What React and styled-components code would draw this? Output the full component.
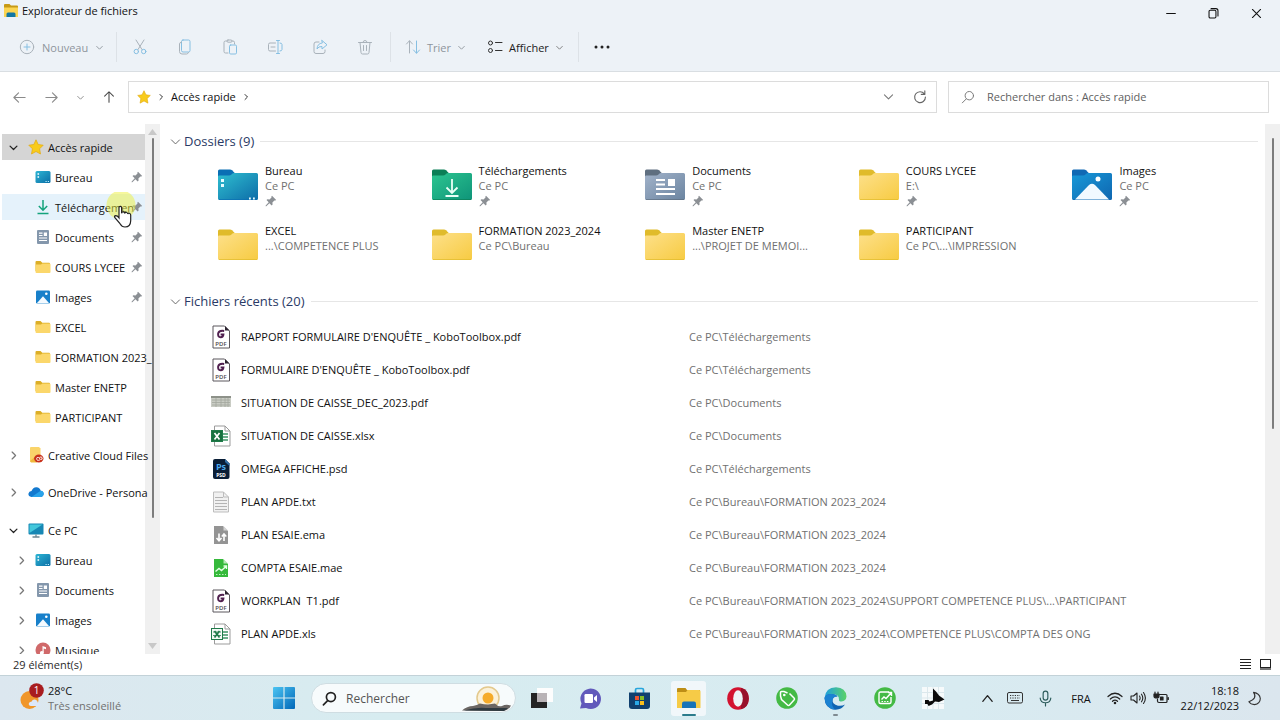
import React, { useState } from 'react';
import styled, { createGlobalStyle } from 'styled-components';

const GlobalStyle = createGlobalStyle`
  * { box-sizing: border-box; }
  body {
    margin: 0;
    overflow: hidden;
    font-family: 'Open Sans', 'Noto Sans', sans-serif;
    font-size: 11px;
    line-height: 15px;
    color: #111;
  }
  button, input {
    font: inherit;
    color: inherit;
    margin: 0;
    padding: 0;
    border: 0;
    background: none;
  }
  svg { display: block; flex: none; }
`;

/* ---------- data ---------- */

const quickAccess = [
  { name: 'Bureau', icon: 'desktop', pinned: true },
  { name: 'Téléchargemen', icon: 'download', pinned: true, hover: true },
  { name: 'Documents', icon: 'document', pinned: true },
  { name: 'COURS LYCEE', icon: 'folder', pinned: true },
  { name: 'Images', icon: 'picture', pinned: true },
  { name: 'EXCEL', icon: 'folder' },
  { name: 'FORMATION 2023_', icon: 'folder' },
  { name: 'Master ENETP', icon: 'folder' },
  { name: 'PARTICIPANT', icon: 'folder' },
];

const thisPc = [
  { name: 'Bureau', icon: 'desktop' },
  { name: 'Documents', icon: 'document' },
  { name: 'Images', icon: 'picture' },
  { name: 'Musique', icon: 'music' },
];

const folders = [
  { name: 'Bureau', path: 'Ce PC', kind: 'desktop', pinned: true },
  { name: 'Téléchargements', path: 'Ce PC', kind: 'download', pinned: true },
  { name: 'Documents', path: 'Ce PC', kind: 'document', pinned: true },
  { name: 'COURS LYCEE', path: 'E:\\', kind: 'plain', pinned: true },
  { name: 'Images', path: 'Ce PC', kind: 'picture', pinned: true },
  { name: 'EXCEL', path: '...\\COMPETENCE PLUS', kind: 'plain' },
  { name: 'FORMATION 2023_2024', path: 'Ce PC\\Bureau', kind: 'plain' },
  { name: 'Master ENETP', path: '...\\PROJET DE MEMOI...', kind: 'plain' },
  { name: 'PARTICIPANT', path: 'Ce PC\\...\\IMPRESSION', kind: 'plain' },
];

const files = [
  { name: "RAPPORT FORMULAIRE D'ENQUÊTE _ KoboToolbox.pdf", path: 'Ce PC\\Téléchargements', type: 'pdf' },
  { name: "FORMULAIRE D'ENQUÊTE _ KoboToolbox.pdf", path: 'Ce PC\\Téléchargements', type: 'pdf' },
  { name: 'SITUATION DE CAISSE_DEC_2023.pdf', path: 'Ce PC\\Documents', type: 'thumb' },
  { name: 'SITUATION DE CAISSE.xlsx', path: 'Ce PC\\Documents', type: 'xlsx' },
  { name: 'OMEGA AFFICHE.psd', path: 'Ce PC\\Téléchargements', type: 'psd' },
  { name: 'PLAN APDE.txt', path: 'Ce PC\\Bureau\\FORMATION 2023_2024', type: 'txt' },
  { name: 'PLAN ESAIE.ema', path: 'Ce PC\\Bureau\\FORMATION 2023_2024', type: 'ema' },
  { name: 'COMPTA ESAIE.mae', path: 'Ce PC\\Bureau\\FORMATION 2023_2024', type: 'mae' },
  { name: 'WORKPLAN  T1.pdf', path: 'Ce PC\\Bureau\\FORMATION 2023_2024\\SUPPORT COMPETENCE PLUS\\...\\PARTICIPANT', type: 'pdf' },
  { name: 'PLAN APDE.xls', path: 'Ce PC\\Bureau\\FORMATION 2023_2024\\COMPETENCE PLUS\\COMPTA DES ONG', type: 'xls' },
];

/* ---------- icons ---------- */

const Line = ({ size = 16, color = '#5f6368', width = 1, children }) => (
  <svg width={size} height={size} viewBox="0 0 16 16" fill="none" stroke={color} strokeWidth={width} strokeLinecap="round" strokeLinejoin="round">
    {children}
  </svg>
);

const Chevron = ({ dir = 'down', size = 10, color = '#555', width = 1.6 }) => {
  const d = { down: 'M3 6l5 5 5-5', right: 'M6 3l5 5-5 5', up: 'M3 11l5-6 5 6' }[dir];
  return <Line size={size} color={color} width={width}><path d={d} /></Line>;
};

const Star = ({ size = 14 }) => (
  <svg width={size} height={size} viewBox="0 0 16 16">
    <path d="M8 .8l2.2 4.7 5 .7-3.6 3.6.9 5.2L8 12.5 3.500 15l.9-5.200L.8 6.200l5-.7z" fill="#f8cb1c" stroke="#e2a90f" strokeWidth=".7" />
  </svg>
);

const Pin = () => (
  <svg width="12" height="12" viewBox="0 0 12 12">
    <path d="M7 .8l4.200 4.200-1 .6-.8-.1-2 2.100.2 2-.9.900-2.300-2.300L1.300 11.300l-.7-.1.1-.8 3-3.100L1.500 5.100l.9-.9 2.100.2 2-2-.1-.8z" fill="#8b8f94" />
  </svg>
);

const smallIcons = {
  desktop: (
    <svg width="16" height="16" viewBox="0 0 16 16">
      <defs><linearGradient id="sDesk" x1="0" y1="0" x2="1" y2="1"><stop offset="0" stopColor="#2db5d4" /><stop offset="1" stopColor="#0b6ea6" /></linearGradient></defs>
      <rect x=".5" y="2" width="15" height="12" rx="1.500" fill="url(#sDesk)" />
      <path d="M2.500 5h1.600M2.500 8h1.600" stroke="#fff" strokeWidth="1.500" />
      <path d="M10.500 12.500h1.200M12.800 12.500h1.200" stroke="#bdf0ff" strokeWidth="1" />
    </svg>
  ),
  download: (
    <svg width="16" height="16" viewBox="0 0 16 16" fill="none" stroke="#14a37c" strokeWidth="1.500">
      <path d="M8 1v10M3.800 7L8 11.200 12.200 7M2.500 14.500h11" />
    </svg>
  ),
  document: (
    <svg width="16" height="16" viewBox="0 0 16 16">
      <rect x="2" y="1" width="12" height="14" rx="1" fill="#8497ac" />
      <path d="M4 4.200h3.500M4 6.500h3.500M4 9h8M4 11.500h8" stroke="#fff" strokeWidth="1.200" />
      <rect x="8.800" y="3.500" width="3.200" height="3.500" fill="#fff" />
    </svg>
  ),
  folder: (
    <svg width="16" height="16" viewBox="0 0 16 16">
      <path d="M.5 3q0-1 1-1h4l1.800 1.800H14q1 0 1 1V12H.5z" fill="#dcae26" />
      <path d="M.5 5.500h5.500l1.300-1H14.500q1 0 1 1V13q0 1-1 1h-13q-1 0-1-1z" fill="#fbd76b" />
    </svg>
  ),
  picture: (
    <svg width="16" height="16" viewBox="0 0 16 16">
      <rect x="1" y="1.500" width="14" height="13" rx="1.200" fill="#1880ca" />
      <path d="M1.800 14.300L8 7.200l6.200 7.100z" fill="#f4faff" />
      <circle cx="11.300" cy="4.800" r="1.300" fill="#fff" />
    </svg>
  ),
  music: (
    <svg width="16" height="16" viewBox="0 0 16 16">
      <circle cx="8" cy="8" r="7.500" fill="#d0696a" />
      <path d="M7.500 11V4l3.500 1.200v2L8.700 6.500V11" fill="#fff" />
      <circle cx="6.800" cy="11" r="1.900" fill="#fff" />
    </svg>
  ),
  cloudFiles: (
    <svg width="16" height="16" viewBox="0 0 16 16">
      <path d="M2 1q0-1 1-1h8l1.500 1.500V15H3q-1 0-1-1z" fill="#fad46a" />
      <path d="M2 14l1 1.500h6L8 9z" fill="#f0b93c" />
      <ellipse cx="10.800" cy="11.500" rx="4.700" ry="4" fill="#c9321c" />
      <path d="M12 12.800q-3 1.600-3.400-1 .1-1.900 2-1.300l2 2q2.200.2 1.500-1.800-.8-1.500-2.700-.2" fill="none" stroke="#fff" strokeWidth=".9" />
    </svg>
  ),
  oneDrive: (
    <svg width="16" height="16" viewBox="0 0 16 16">
      <path d="M3.500 13Q.3 12.600.4 9.800.9 7.200 3.500 7 5 3 8.500 3.200q3.300.3 4.200 3.500 2.900.4 3 3.100-.2 3-3.200 3.200z" fill="#1379cf" />
      <path d="M3.500 13l6.200-4.200 3-2q2.900.4 3 3-.2 3-3.200 3.200z" fill="#29a3ea" />
    </svg>
  ),
  pc: (
    <svg width="16" height="16" viewBox="0 0 16 16">
      <rect x=".5" y="1.500" width="15" height="11" rx="1" fill="#1787b4" />
      <path d="M1.500 2.500h13L1.500 11z" fill="#43c7db" />
      <path d="M8 12.500v2M4.500 15h7" stroke="#6d8793" strokeWidth="1.300" />
    </svg>
  ),
};

const folderColors = {
  desktop: ['#0a6fb4', '#2fbfd0', '#0d6ca8'],
  download: ['#0b7f56', '#2cc590', '#0f9479'],
  document: ['#5f6f80', '#a2b3ca', '#6b84a0'],
  picture: ['#1069b4', '#1899d8', '#0f66b0'],
  plain: ['#e0bb2b', '#fde08a', '#f7cb42'],
};

const BigFolder = ({ kind }) => {
  const [tab, from, to] = folderColors[kind];
  return (
    <svg width="40" height="34" viewBox="0 0 40 34">
      <defs>
        <linearGradient id={`big-${kind}`} x1="0" y1="0" x2="1" y2="1">
          <stop offset="0" stopColor={from} /><stop offset="1" stopColor={to} />
        </linearGradient>
      </defs>
      <path d="M0 3q0-1.500 1.500-1.500H12q1.200 0 2 .8l3 3V9H0z" fill={tab} />
      <path d="M0 8.500q0-1 1.200-1H11q1.500 0 2.500-1l1-1q.6-.6 1.500-.6h22.500q1.500 0 1.500 1.500V30.500q0 1.500-1.500 1.500h-37Q0 32 0 30.500z" fill={`url(#big-${kind})`} />
      <path d="M1 31.500h38" stroke={tab} strokeOpacity=".7" />
      {kind === 'desktop' && (
        <g>
          <path d="M3 12.500h3M3 17.500h3" stroke="#e6fbff" strokeWidth="3" />
          <path d="M31 30.500h1.800M35 30.500h1.800" stroke="#e6fbff" strokeWidth="1.800" />
        </g>
      )}
      {kind === 'download' && <path d="M20 11v14M14.500 19.500l5.500 5.500 5.500-5.500M13.500 28h13" fill="none" stroke="#eafff7" strokeWidth="1.800" />}
      {kind === 'document' && (
        <g>
          <path d="M11 12h9M11 16.500h9M11 21h19M11 26h19" stroke="#fff" strokeWidth="1.800" />
          <rect x="23" y="11" width="7" height="7" fill="#fff" />
        </g>
      )}
      {kind === 'picture' && (
        <g>
          <path d="M3 31.500L17 17q3-2.500 6 0l14 14.500z" fill="#f1f9ff" />
          <circle cx="26" cy="11" r="2.500" fill="#fff" />
        </g>
      )}
    </svg>
  );
};

const Sheet = ({ fill = '#fff', stroke = '#9a9a9a', children }) => (
  <svg width="20" height="24" viewBox="0 0 20 24">
    <path d="M2.500 2h10l5 5v15h-15z" fill={fill} stroke={stroke} />
    {children}
  </svg>
);

const Excel = ({ solid }) => (
  <svg width="20" height="24" viewBox="0 0 20 24">
    <path d="M3.500 2h10.500l5 5v15H3.500z" fill="#fff" stroke="#9b9b9b" />
    <path d="M14 2v5h5" fill="none" stroke="#9b9b9b" />
    <path d="M12 10h5M12 13h5M12 16h5" stroke="#3c9465" strokeWidth="1.300" />
    <rect x=".5" y="6.500" width="11" height="11" fill={solid ? '#17713f' : '#f2f9f5'} stroke="#1f7a49" />
    {!solid && <path d="M2 10h8M2 13.500h8" stroke="#1f7a49" strokeWidth=".8" />}
    <path d="M3.500 9l5 6.500M8.500 9l-5 6.500" stroke={solid ? '#fff' : '#1f7a49'} strokeWidth="1.700" />
  </svg>
);

const fileIcons = {
  pdf: (
    <svg width="20" height="24" viewBox="0 0 20 24">
      <path d="M2 1h11.500l5 5v17H2z" fill="#fff" stroke="#5b565c" strokeWidth="1" />
      <path d="M14 1v4.500h4.500z" fill="#2d2430" />
      <path d="M13.200 6q-5-.8-6 2.300-.6 3.900 2.500 4 2.500-.2 2.700-2.900H9.600" fill="none" stroke="#50204f" strokeWidth="2" />
      <text x="10" y="20.500" fontSize="6" fontWeight="600" textAnchor="middle" fill="#4d474e">PDF</text>
    </svg>
  ),
  thumb: (
    <svg width="20" height="24" viewBox="0 0 20 24">
      <rect y="5" width="20" height="11" fill="#c9ccc4" />
      <path d="M0 6h20" stroke="#8d9189" strokeWidth="2" />
      <path d="M1 9h18M1 11.500h18M1 14h18M5 7v9M10 7v9M14 7v9M17 7v9" stroke="#a3a79e" strokeWidth=".8" />
    </svg>
  ),
  xlsx: <Excel solid />,
  xls: <Excel />,
  psd: (
    <svg width="20" height="24" viewBox="0 0 20 24">
      <path d="M4 2h10l4.500 4.500V20q0 2-2 2H4q-2 0-2-2V4q0-2 2-2z" fill="#0a1e36" />
      <path d="M14 2l4.500 4.500V9L14 5z" fill="#2f6ea5" />
      <text x="10" y="13" fontSize="9" fontWeight="700" textAnchor="middle" fill="#4ba9ee">Ps</text>
      <text x="10" y="19.500" fontSize="5" fontWeight="700" textAnchor="middle" fill="#fff">PSD</text>
    </svg>
  ),
  txt: (
    <Sheet fill="#f1f1f1" stroke="#bdbdbd">
      <path d="M12.500 2v5h5" fill="none" stroke="#bdbdbd" />
      <path d="M4 7.500h8M4 10.500h12M4 13.500h12M4 16.500h12M4 19.500h12" stroke="#b4b4b4" />
    </Sheet>
  ),
  ema: (
    <svg width="20" height="24" viewBox="0 0 20 24">
      <path d="M3 3h9l5 5v12.500q0 .5-1 .5H3z" fill="#949494" />
      <path d="M12.500 3v4.500H17z" fill="#d2d2d2" />
      <path d="M8 10.500v7M5.500 15L8 17.700l2.500-2.700M13 18v-7M10.800 13.500L13 11l2.300 2.500" fill="none" stroke="#fff" strokeWidth="1.600" />
    </svg>
  ),
  mae: (
    <svg width="20" height="24" viewBox="0 0 20 24">
      <path d="M3 3h9l5 5v13H3z" fill="#35b93b" />
      <path d="M12.500 3v4.500H17z" fill="#b5e8b5" />
      <path d="M4.500 15.500l3.500-3 2.500 2L15.500 10M12.500 10h3v3" fill="none" stroke="#e5ffe5" strokeWidth="1.400" />
      <path d="M5 18.500h10" stroke="#bff0bf" strokeDasharray="1.500 1.500" />
    </svg>
  ),
};

const AppIcon = () => (
  <svg width="16" height="16" viewBox="0 0 16 16">
    <path d="M1 2q0-1 1-1h4.500L8 2.500h6q1 0 1 1V8H1z" fill="#c79a16" />
    <path d="M1 4.500h14V14H1z" fill="#fbd552" />
    <path d="M3.500 14v-3q0-1.500 1.500-1.500h6q1.500 0 1.500 1.500v3z" fill="#1277a3" />
  </svg>
);

/* command bar drawings: grey outline with a light blue accent */
const grey = '#a9b2ba';
const blue = '#86bfe2';

const CutIcon = () => (
  <Line color={grey}>
    <path d="M4 1l6 9.500M12 1L6 10.500" />
    <circle cx="4.300" cy="12.500" r="2.200" stroke={blue} /><circle cx="11.700" cy="12.500" r="2.200" stroke={blue} />
  </Line>
);
const CopyIcon = () => (
  <Line color={blue}>
    <rect x="4.500" y="1" width="8.500" height="12" rx="1.500" /><path d="M4.500 3q-2 .3-2 2v7.500q0 2.500 2.500 2.500h4.500q1.500 0 2-1.500" stroke={grey} />
  </Line>
);
const PasteIcon = () => (
  <Line color={grey}>
    <path d="M6 14H3.500Q2 14 2 12.500v-9Q2 2 3.500 2H5M10 2h1q1.500 0 1.500 1.500V5" /><rect x="5" y="1" width="5" height="2.200" rx="1" />
    <rect x="7.500" y="6" width="7" height="9" rx="1.200" stroke={blue} />
  </Line>
);
const RenameIcon = () => (
  <Line color={grey}>
    <path d="M8.500 12H3q-1.500 0-1.500-1.500v-5Q1.500 4 3 4h5.500M4 8h4" />
    <path d="M11 1.500v13M9.500 1.500h3M9.500 14.500h3M13 4q2 0 2 1.500v5Q15 12 13 12" stroke={blue} />
  </Line>
);
const ShareIcon = () => (
  <Line color={grey}>
    <path d="M7 3H4Q2 3 2 5v7.500q0 2 2 2h7q2 0 2-2V11" />
    <path d="M10 1.500l5 4.300-5 4.200V7.500q-3.500-.3-5 2.500.3-5.500 5-6z" stroke={blue} />
  </Line>
);
const TrashIcon = () => (
  <Line color={grey}><path d="M1.500 3.500h13M6 3.500Q6 1.500 8 1.500t2 2M3 3.500l1 10q.1 1.500 1.500 1.500h5q1.400 0 1.500-1.500l1-10M6.500 6.500v5M9.500 6.500v5" /></Line>
);
const PlusIcon = () => (
  <Line color={grey}><circle cx="8" cy="8" r="6.700" /><path d="M8 5v6M5 8h6" stroke={blue} /></Line>
);
const SortIcon = () => (
  <Line color={grey}><path d="M4.500 14V2M1.500 5l3-3.300 3 3.300" /><path d="M11.500 2v12M8.500 11l3 3.300 3-3.300" stroke={blue} /></Line>
);
const ViewIcon = () => (
  <Line color="#333"><circle cx="3.500" cy="4" r="2" /><circle cx="3.500" cy="11.500" r="2" /><path d="M8.500 3.500H15M8.500 11.500H15" /></Line>
);
const SearchIcon = ({ size = 14, color = '#777', width = 1.1 }) => (
  <Line size={size} color={color} width={width}><circle cx="9.500" cy="6.500" r="4.800" /><path d="M6 10.200L1.500 14.700" /></Line>
);

/* ---------- window ---------- */

const Screen = styled.div`
  display: flex;
  flex-direction: column;
  height: 100vh;
  background: #fff;
`;

const Header = styled.header`
  background: #edf2f7;
  border-bottom: 1px solid #d9dee2;
`;

const TitleBar = styled.div`
  display: flex;
  justify-content: space-between;
  height: 26px;
`;

const Title = styled.h1`
  display: flex;
  align-items: center;
  gap: 3px;
  height: 21px;
  margin: 0;
  padding-left: 3px;
  font-size: 11px;
  font-weight: 400;
`;

const WindowButtons = styled.div`
  display: flex;
  padding-right: 2px;
`;

const WindowButton = styled.button`
  display: grid;
  place-items: center;
  width: 43px;
`;

const CommandBar = styled.div`
  display: flex;
  align-items: center;
  height: 45px;
  padding: 0 0 3px 19px;
`;

const Command = styled.button`
  display: flex;
  align-items: center;
  gap: ${p => p.$gap || 7}px;
  width: ${p => p.$width}px;
  color: ${p => (p.$active ? '#1b1b1b' : '#8d959c')};
`;

const ToolGroup = styled.div`
  display: flex;
  padding-right: 3px;
`;

const SortGroup = styled.div`
  display: flex;
  padding-left: 14px;
`;

const Tool = styled.button`
  display: grid;
  place-items: center;
  width: 45px;
  height: 30px;
`;

const Divider = styled.span`
  width: 1px;
  height: 30px;
  background: #dde2e7;
`;

const AddressRow = styled.div`
  display: flex;
  align-items: center;
  padding: 9px 11px 11px 12px;
`;

const NavButtons = styled.nav`
  display: flex;
  align-items: center;
  gap: 17px;
  width: 116px;
`;

const NavButton = styled.button`
  display: grid;
  place-items: center;
`;

const AddressBox = styled.div`
  display: flex;
  align-items: center;
  flex: 1;
  gap: 6px;
  height: 32px;
  padding: 0 9px 1px 8px;
  border: 1px solid #dcdcdc;
`;

const Crumb = styled.a`
  color: inherit;
  text-decoration: none;
`;

const AddressActions = styled.div`
  display: flex;
  gap: 18px;
  margin-left: auto;
`;

const SearchBox = styled.label`
  display: flex;
  align-items: center;
  gap: 12px;
  flex: 0 0 321px;
  height: 32px;
  margin-left: 11px;
  padding: 0 0 1px 12px;
  border: 1px solid #dcdcdc;

  input {
    flex: 1;
    min-width: 0;
    outline: none;
  }
  input::placeholder {
    color: #5f5f5f;
    opacity: 1;
  }
`;

const Body = styled.div`
  display: flex;
  flex: 1;
  min-height: 0;
`;

/* ---------- side tree ---------- */

const Tree = styled.nav`
  position: relative;
  z-index: 1;
  display: flex;
  flex-direction: column;
  gap: 8px;
  width: 145px;
  padding: 8px 0 0 2px;
  overflow-x: visible;
  overflow-y: clip;
`;

const TreeGroup = styled.div`
  display: flex;
  flex-direction: column;
  gap: ${p => p.$gap || 0}px;
`;

const TreeRow = styled.button`
  position: relative;
  display: flex;
  align-items: center;
  flex: none;
  gap: 4px;
  width: 100%;
  height: 26px;
  margin: 2px 0;
  padding-left: ${p => (p.$level ? 14 : 6)}px;
  padding-right: 2px;
  text-align: left;
  white-space: nowrap;
  background: ${p => (p.$selected ? '#d5d5d5' : p.$hover ? '#e5f2fb' : 'transparent')};
`;

const Twisty = styled.span`
  width: ${p => (p.$level ? 15 : 16)}px;
  flex: none;
`;

const TreeLabel = styled.span`
  flex: 1;
  min-width: 0;
`;

const PinSlot = styled.span`
  flex: none;
`;

/* click halo and hand pointer resting on the hovered row */
const Pointer = styled.span`
  position: absolute;
  left: 103px;
  top: -2px;
  z-index: 1;
  pointer-events: none;
`;

const Track = styled.div`
  display: flex;
  flex-direction: column;
  align-items: center;
  flex: none;
  width: 15px;
  padding: 5px 0;
  background: #f0f0f0;
`;

const Thumb = styled.span`
  width: 2px;
  margin-top: 3px;
  height: ${p => p.$size}%;
  border-radius: 1px;
  background: #7d7d7d;
`;

const TrackEnd = styled.span`
  margin-top: auto;
`;

/* ---------- content ---------- */

const Content = styled.main`
  flex: 1;
  min-width: 0;
  padding-right: 7px;
  overflow: hidden;
`;

const SectionTitle = styled.h2`
  display: flex;
  align-items: center;
  gap: 2px;
  height: 34px;
  margin: 0;
  padding-left: 9px;
  font-size: 13px;
  font-weight: 400;
  color: #2a3a66;

  &::after {
    content: '';
    flex: 1;
    height: 1px;
    margin-left: 4px;
    background: #e6e6e6;
  }
`;

const FolderGrid = styled.div`
  display: grid;
  grid-template-columns: repeat(5, 1fr);
  grid-auto-rows: 60px;
  margin-right: -3px;
  padding: 5px 0 1px 33px;
`;

const FolderItem = styled.a`
  display: flex;
  align-items: flex-start;
  gap: 7px;
  padding-left: 25px;
  color: inherit;
  text-decoration: none;

  > svg {
    margin-top: 5px;
  }
`;

const FolderText = styled.div`
  display: flex;
  flex-direction: column;
  white-space: nowrap;

  svg {
    margin-top: 2px;
  }
`;

const Muted = styled.span`
  color: #707070;
`;

const FileTable = styled.table`
  width: 100%;
  margin-top: 2px;
  border-collapse: collapse;
  table-layout: fixed;

  tr { height: 33px; }
  td {
    padding: 0;
    white-space: pre;
  }
  td:first-child {
    width: 529px;
    padding-left: 51px;
  }
`;

const FileName = styled.div`
  display: flex;
  align-items: center;
  gap: 10px;
`;

const StatusBar = styled.footer`
  display: flex;
  align-items: center;
  justify-content: space-between;
  height: 21px;
  padding: 0 8px 1px 13px;
  color: #2b2b2b;
`;

const ViewButtons = styled.div`
  display: flex;
  gap: 7px;
`;

/* ---------- taskbar ---------- */

const TaskBar = styled.div`
  display: flex;
  align-items: center;
  flex: none;
  height: 45px;
  padding-right: 18px;
  border-top: 1px solid #c3d2d8;
  background: linear-gradient(90deg, #dce7ef, #d7ecf0 30%, #d8ebf1 75%, #dbe6ee);
`;

const Weather = styled.button`
  display: flex;
  align-items: center;
  gap: 4px;
  width: 260px;
  padding-left: 19px;
  text-align: left;
`;

const Apps = styled.div`
  display: flex;
  align-items: center;
`;

const AppButton = styled.button`
  position: relative;
  display: grid;
  place-items: center;
  width: 35px;
  height: 35px;
  margin: 0 7px;
  border-radius: 3px;
  background: ${p => (p.$open ? '#f1f7fa' : 'transparent')};

  &::after {
    content: '';
    display: ${p => (p.$mark ? 'block' : 'none')};
    position: absolute;
    bottom: 0;
    width: ${p => p.$mark}px;
    height: 2px;
    border-radius: 1px;
    background: ${p => (p.$open ? '#2c7c8c' : '#7f8a90')};
  }
`;

const StartButton = styled.button`
  display: grid;
  place-items: center;
  width: 48px;
  height: 35px;
`;

const TaskSearch = styled.label`
  display: flex;
  align-items: center;
  gap: 9px;
  width: 205px;
  height: 30px;
  margin: 0 1px 0 3px;
  padding: 0 3px 0 10px;
  border: 1px solid #cfdde2;
  border-radius: 15px;
  background: #f7fbfc;

  input {
    flex: 1;
    min-width: 0;
    font-size: 12px;
    outline: none;
  }
  input::placeholder {
    color: #555;
    opacity: 1;
  }
`;

const Tray = styled.div`
  display: flex;
  align-items: center;
  margin-left: auto;
`;

const TrayButton = styled.button`
  display: flex;
  align-items: center;
  justify-content: center;
  gap: 7px;
  min-width: ${p => p.$width}px;
`;

const Clock = styled.button`
  width: 64px;
  margin-right: 8px;
  text-align: right;
`;

const Caret = ({ flip }) => (
  <svg width="9" height="6" viewBox="0 0 9 6"><path d={flip ? 'M0 0h9L4.500 6z' : 'M4.500 0L9 6H0z'} fill="#c8c8c8" /></svg>
);

function ScrollTrack({ size, arrows }) {
  return (
    <Track>
      {arrows ? <Caret /> : <svg width="9" height="6" />}
      <Thumb $size={size} />
      {arrows && <TrackEnd><Caret flip /></TrackEnd>}
    </Track>
  );
}

function TreeItem({ name, icon, level = 0, expand, pinned, hover, selected }) {
  return (
    <TreeRow $level={level} $hover={hover} $selected={selected} aria-expanded={expand ? expand === 'down' : undefined}>
      <Twisty $level={level}>
        {expand && <Chevron dir={expand} size={11} width={1.8} color={expand === 'down' ? '#222' : '#777'} />}
      </Twisty>
      {icon === 'star' ? <Star size={16} /> : smallIcons[icon]}
      <TreeLabel>{name}</TreeLabel>
      {pinned && <PinSlot><Pin /></PinSlot>}
      {hover && (
        <Pointer>
          <svg width="32" height="42" viewBox="0 0 32 42">
            <circle cx="16" cy="13" r="14.500" fill="#eef03c" fillOpacity=".5" />
            <path d="M14 15q1.600-1.300 2.600.3v6q.4-1.800 1.900-1.400 1.100.3 1.200 1.600.3-1.400 1.800-1 1.300.3 1.300 1.600.3-1.200 1.600-.8 1.300.4 1.300 1.900v5.500q-.2 6.300-5.700 6.300-3.200-.1-5-3.300l-5.300-6.300q-.6-1.600 1-1.800 1.700 0 3.300 2.200z" fill="#fff" stroke="#222" strokeWidth="1.200" />
          </svg>
        </Pointer>
      )}
    </TreeRow>
  );
}

function App() {
  const [query, setQuery] = useState('');
  const [webQuery, setWebQuery] = useState('');

  return (
    <Screen>
      <GlobalStyle />
      <Header>
        <TitleBar>
          <Title><AppIcon />Explorateur de fichiers</Title>
          <WindowButtons>
            <WindowButton aria-label="Réduire"><Line size={14} color="#111" width={1.2}><path d="M3 8.500h10" /></Line></WindowButton>
            <WindowButton aria-label="Restaurer">
              <Line size={13} color="#111" width={1.3}><rect x="2.500" y="4" width="8.500" height="9.500" rx="1.500" /><path d="M5 2h6q2.500 0 2.500 2.500V11" /></Line>
            </WindowButton>
            <WindowButton aria-label="Fermer"><Line size={13} color="#111" width={1.3}><path d="M3 3l10 10M13 3L3 13" /></Line></WindowButton>
          </WindowButtons>
        </TitleBar>
        <CommandBar>
          <Command $width={97}><PlusIcon />Nouveau<Chevron size={9} color="#8d959c" /></Command>
          <Divider />
          <ToolGroup>
            <Tool aria-label="Couper"><CutIcon /></Tool>
            <Tool aria-label="Copier"><CopyIcon /></Tool>
            <Tool aria-label="Coller"><PasteIcon /></Tool>
            <Tool aria-label="Renommer"><RenameIcon /></Tool>
            <Tool aria-label="Partager"><ShareIcon /></Tool>
            <Tool aria-label="Supprimer"><TrashIcon /></Tool>
          </ToolGroup>
          <Divider />
          <SortGroup>
            <Command $width={82} $gap={6}><SortIcon />Trier<Chevron size={9} color="#8d959c" /></Command>
            <Command $width={91} $gap={6} $active><ViewIcon />Afficher<Chevron size={9} color="#777" /></Command>
          </SortGroup>
          <Divider />
          <Tool aria-label="Plus">
            <svg width="16" height="4" viewBox="0 0 16 4" fill="#222"><circle cx="2" cy="2" r="1.500" /><circle cx="8" cy="2" r="1.500" /><circle cx="14" cy="2" r="1.500" /></svg>
          </Tool>
        </CommandBar>
      </Header>

      <AddressRow>
        <NavButtons>
          <NavButton aria-label="Précédent"><Line size={15} color="#8b8b8b" width={1.2}><path d="M14 8H2M7 3L2 8l5 5" /></Line></NavButton>
          <NavButton aria-label="Suivant"><Line size={15} color="#8b8b8b" width={1.2}><path d="M2 8h12M9 3l5 5-5 5" /></Line></NavButton>
          <NavButton aria-label="Historique"><Chevron size={9} color="#888" /></NavButton>
          <NavButton aria-label="Dossier parent"><Line size={14} color="#444" width={1.2}><path d="M8 14V2M3 7l5-5 5 5" /></Line></NavButton>
        </NavButtons>
        <AddressBox>
          <Star />
          <Chevron dir="right" size={8} color="#333" width={2} />
          <Crumb href="#quick">Accès rapide</Crumb>
          <Chevron dir="right" size={8} color="#333" width={2} />
          <AddressActions>
            <NavButton aria-label="Emplacements"><Chevron size={13} color="#777" width={1.3} /></NavButton>
            <NavButton aria-label="Actualiser">
              <Line size={14} color="#666" width={1.3}><path d="M13 4.500A6.200 6.200 0 1 0 14.200 8M13.500 1v4h-4" /></Line>
            </NavButton>
          </AddressActions>
        </AddressBox>
        <SearchBox>
          <SearchIcon />
          <input aria-label="Rechercher dans le dossier" placeholder="Rechercher dans : Accès rapide" value={query} onChange={e => setQuery(e.target.value)} />
        </SearchBox>
      </AddressRow>

      <Body>
        <Tree>
          <TreeGroup>
            <TreeItem name="Accès rapide" icon="star" expand="down" selected />
            {quickAccess.map(item => <TreeItem key={item.name} level={1} {...item} />)}
          </TreeGroup>
          <TreeGroup $gap={7}>
            <TreeItem name="Creative Cloud Files" icon="cloudFiles" expand="right" />
            <TreeItem name="OneDrive - Persona" icon="oneDrive" expand="right" />
          </TreeGroup>
          <TreeGroup>
            <TreeItem name="Ce PC" icon="pc" expand="down" />
            {thisPc.map(item => <TreeItem key={item.name} level={1} expand="right" {...item} />)}
          </TreeGroup>
        </Tree>
        <ScrollTrack size={73} arrows />

        <Content>
          <SectionTitle><Chevron size={13} color="#666" width={1.2} />Dossiers (9)</SectionTitle>
          <FolderGrid>
            {folders.map(f => (
              <FolderItem key={f.name} href="#folder">
                <BigFolder kind={f.kind} />
                <FolderText>
                  <span>{f.name}</span>
                  <Muted>{f.path}</Muted>
                  {f.pinned && <Pin />}
                </FolderText>
              </FolderItem>
            ))}
          </FolderGrid>
          <SectionTitle><Chevron size={13} color="#666" width={1.2} />Fichiers récents (20)</SectionTitle>
          <FileTable>
            <tbody>
              {files.map(f => (
                <tr key={f.name}>
                  <td><FileName>{fileIcons[f.type]}{f.name}</FileName></td>
                  <td><Muted>{f.path}</Muted></td>
                </tr>
              ))}
            </tbody>
          </FileTable>
        </Content>
        <ScrollTrack size={56} />
      </Body>

      <StatusBar>
        29 élément(s)
        <ViewButtons>
          <NavButton aria-label="Détails">
            <svg width="13" height="12" viewBox="0 0 13 12"><path d="M1 1.500h11M1 4.500h11M1 7.500h11M1 10.500h11" stroke="#222" /></svg>
          </NavButton>
          <NavButton aria-label="Grandes icônes">
            <svg width="13" height="12" viewBox="0 0 13 12"><rect x="1.500" y="1.500" width="10" height="8" fill="none" stroke="#222" /><path d="M1 11h11" stroke="#777" strokeWidth="2" /></svg>
          </NavButton>
        </ViewButtons>
      </StatusBar>

      <TaskBar>
        <Weather>
          <svg width="25" height="30" viewBox="0 0 25 30">
            <circle cx="10.500" cy="17" r="9" fill="#f0962a" />
            <path d="M12 23q-2.500-.3-2.200-2.600.6-2 2.600-1.700 1.300-2.700 4.200-2 2 .8 2.200 2.800 3 .2 2.700 2.300-.5 1.500-2.500 1.200z" fill="#dce7fa" />
            <circle cx="17.500" cy="7.500" r="7.300" fill="#a81c1f" />
            <text x="17.500" y="11.300" fontSize="10" textAnchor="middle" fill="#fff">1</text>
          </svg>
          <span>28°C<br /><Muted>Très ensoleillé</Muted></span>
        </Weather>
        <Apps>
          <StartButton aria-label="Démarrer">
            <svg width="22" height="22" viewBox="0 0 22 22">
              <defs><linearGradient id="win" x1="0" y1="0" x2="1" y2="1"><stop offset="0" stopColor="#4cc4f2" /><stop offset="1" stopColor="#0067b8" /></linearGradient></defs>
              <path d="M0 1q0-1 1-1h9.400v10.400H0zM11.600 0H21q1 0 1 1v9.400H11.600zM0 11.600h10.400V22H1q-1 0-1-1zM11.600 11.600H22V21q0 1-1 1h-9.400z" fill="url(#win)" />
            </svg>
          </StartButton>
          <TaskSearch>
            <SearchIcon size={15} color="#222" width={1.8} />
            <input aria-label="Recherche Windows" placeholder="Rechercher" value={webQuery} onChange={e => setWebQuery(e.target.value)} />
            <svg width="50" height="28" viewBox="0 0 50 28">
              <circle cx="26" cy="14" r="11" fill="#fbf1d9" stroke="#e3c98d" strokeWidth="1.500" />
              <circle cx="26" cy="14" r="5.500" fill="#f5ab2a" />
              <path d="M0 26.500q5-4.500 11-4.500 4-1 7-2.500 4 1 8 1l7-1q3 3.500 7 2.500 4-2 9-.5-2 4.500-8 5.500z" fill="#6b6663" />
              <path d="M2 26.500q12-3.500 22-2.500 12 0 22 0l-4 3z" fill="#2f3a40" />
            </svg>
          </TaskSearch>
          <AppButton aria-label="Vue des tâches">
            <svg width="22" height="22" viewBox="0 0 22 22">
              <rect x="6" y="1" width="16" height="14" fill="#fdfdfd" /><rect y="6" width="16" height="15" fill="#242424" /><rect x="6" y="6" width="10" height="9" fill="#b9b3b6" />
            </svg>
          </AppButton>
          <AppButton aria-label="Conversation">
            <svg width="23" height="23" viewBox="0 0 23 23">
              <path d="M1 21.500l1.500-5A10.300 10.300 0 1 1 7 21z" fill="#6159bb" />
              <rect x="5.500" y="7" width="8.500" height="9" rx="1.200" fill="#fff" /><path d="M15 10.500l3-2.500v7l-3-2.500z" fill="#fff" />
            </svg>
          </AppButton>
          <AppButton aria-label="Microsoft Store">
            <svg width="23" height="23" viewBox="0 0 23 23">
              <path d="M7.500 6V3q0-1.500 1.500-1.500h5q1.500 0 1.500 1.500v3" fill="none" stroke="#27a5dc" strokeWidth="1.700" />
              <path d="M1 5.500h21V19q0 3-3 3H4q-3 0-3-3z" fill="#10406f" />
              <path d="M7 9h4v4H7z" fill="#ee5330" /><path d="M12 9h4v4h-4z" fill="#86bc25" /><path d="M7 14h4v4H7z" fill="#29a9e8" /><path d="M12 14h4v4h-4z" fill="#fbbe1b" />
            </svg>
          </AppButton>
          <AppButton aria-label="Explorateur de fichiers" $open $mark={14}>
            <svg width="24" height="22" viewBox="0 0 24 22">
              <path d="M0 2q0-1 1-1h7.500L10 3h13v5H0z" fill="#bd8e16" />
              <path d="M0 5h9l1.500-2H22q1.500 0 1.500 1.500V21H0z" fill="#f6cb47" />
              <path d="M5 21v-4.500Q5 14.500 7 14.500h10q2 0 2 2V21z" fill="#1773b8" />
            </svg>
          </AppButton>
          <AppButton aria-label="Opera">
            <svg width="22" height="23" viewBox="0 0 22 23">
              <ellipse cx="11" cy="11.500" rx="10.800" ry="11.200" fill="#d3122f" /><path d="M14 1q8 1.500 7.800 10.500Q21.500 21 14 22z" fill="#98102a" />
              <ellipse cx="11" cy="11.500" rx="4.800" ry="8.200" fill="#eef3f6" />
            </svg>
          </AppButton>
          <AppButton aria-label="Gestion commerciale">
            <svg width="22" height="22" viewBox="0 0 22 22">
              <circle cx="11" cy="11" r="10.800" fill="#44ba45" />
              <path d="M11.500 6L8 4.500H5.500Q4.500 4.500 4.500 5.500V9l1 3.500 6 5.500q1 1 2 0l4.500-5q1-1 0-2l-4.500-4.500" fill="none" stroke="#fff" strokeWidth="1.500" /><circle cx="8.300" cy="8" r="1.300" fill="#fff" />
            </svg>
          </AppButton>
          <AppButton aria-label="Edge" $mark={5}>
            <svg width="23" height="23" viewBox="0 0 23 23">
              <defs>
                <linearGradient id="edgeA" x1="0" y1="0" x2="1" y2="0"><stop offset="0" stopColor="#1d9fe0" /><stop offset="1" stopColor="#5bd267" /></linearGradient>
              </defs>
              <path d="M.5 11Q1.500.5 12 .3q9.800.4 10.500 9.200Q22 14 17.500 14.500q-3 0-2.500-2Q15 7.500 9.500 7.200 2 7 .5 11z" fill="url(#edgeA)" />
              <path d="M.5 11Q2 6.800 7.500 7q4.500 0 6 2.500-4-.5-5 3-.3 5 5.500 6.200 4 .6 7-1.200Q17.500 22.800 11.500 22.700.8 22 .5 11z" fill="#1064b2" />
              <path d="M8.500 13q-2 5 2.500 9.700Q1.500 21.500.5 11 2 6.800 7.500 7q4.500 0 6 2.500-4-.5-5 3.500z" fill="#1b82d2" />
            </svg>
          </AppButton>
          <AppButton aria-label="Comptabilité">
            <svg width="22" height="22" viewBox="0 0 22 22">
              <circle cx="11" cy="11" r="10.800" fill="#44ba45" />
              <path d="M15 5H6.500Q5 5 5 6.500v8.500q0 1.500 1.500 1.500h9q1.500 0 1.500-1.500v-5" fill="none" stroke="#fff" strokeWidth="1.400" />
              <path d="M7.500 12.500l2.500-2.500 2 1.500L17 6M14 5.500h3.500V9" fill="none" stroke="#fff" strokeWidth="1.400" /><path d="M7.500 14.500h7.500" stroke="#fff" strokeDasharray="1.500 1.200" />
            </svg>
          </AppButton>
          <AppButton aria-label="Curseur">
            <svg width="23" height="22" viewBox="0 0 23 22">
              <rect width="22" height="22" fill="#f6fafb" /><path d="M5.500 0v22M11 0v22M16.500 0v22M0 5.500h22M0 11h22M0 16.500h22" stroke="#dce8ec" />
              <path d="M11 1.500l3 3 3 4 5.500 4-5.500 2.500-4-.5-3 3-3.500 1.500-1-2H3v-4h3.500l1 1.500 3.500-1z" fill="#0b0b0b" />
            </svg>
          </AppButton>
        </Apps>
        <Tray>
          <TrayButton $width={27} aria-label="Icônes cachées"><Chevron dir="up" size={15} color="#222" width={1.4} /></TrayButton>
          <TrayButton $width={27} aria-label="Clavier">
            <svg width="16" height="12" viewBox="0 0 16 12" fill="none" stroke="#333"><rect x=".5" y=".5" width="15" height="10.500" rx="1.500" /><path d="M3 3.500h10M3 6h10" strokeDasharray="1.200 1.200" /><path d="M4 8.500h8" /></svg>
          </TrayButton>
          <TrayButton $width={34} aria-label="Microphone">
            <Line size={17} color="#2d5c5c" width={1.1}><rect x="5.800" y="1" width="4.400" height="8.500" rx="2.200" /><path d="M3 7.500q.3 4.500 5 4.500t5-4.500M8 12v3" /></Line>
          </TrayButton>
          <TrayButton $width={38}>FRA</TrayButton>
          <TrayButton $width={75} aria-label="Réseau, volume et batterie">
            <Line color="#222" width={1.2}><path d="M1 6.500q7-6.500 14 0M3.300 9q4.700-4.300 9.400 0M5.500 11.300q2.500-2.200 5 0" /><circle cx="8" cy="13" r=".7" fill="#222" /></Line>
            <Line color="#222" width={1.1}><path d="M1 6h2.500L7 3v10L3.500 10H1zM9.500 6q1.300 2 0 4M11.500 4.200q2.600 3.800 0 7.600M13.500 2.500q3.800 5.500 0 11" /></Line>
            <Line color="#222" width={1.2}><path d="M6 4.500h7q1 0 1 1v6q0 1-1 1H6q-1.500 0-1.500-1.500V9M15.300 7.500v2M2 2v2M5 2v2" /><path d="M1 4h5v2q0 2-2.500 2T1 6z" fill="#222" /><path d="M7.500 7h2.500v3H7.500z" fill="#222" /></Line>
          </TrayButton>
          <Clock>18:18<br />22/12/2023</Clock>
          <TrayButton aria-label="Ne pas déranger">
            <Line size={15} color="#333" width={1.2}><path d="M7 1.500q4.500 6.500-5 10 2 3 6 3 6-.8 6.200-6.500Q13.500 2.500 7 1.500z" /></Line>
          </TrayButton>
        </Tray>
      </TaskBar>
    </Screen>
  );
}

export default App;
